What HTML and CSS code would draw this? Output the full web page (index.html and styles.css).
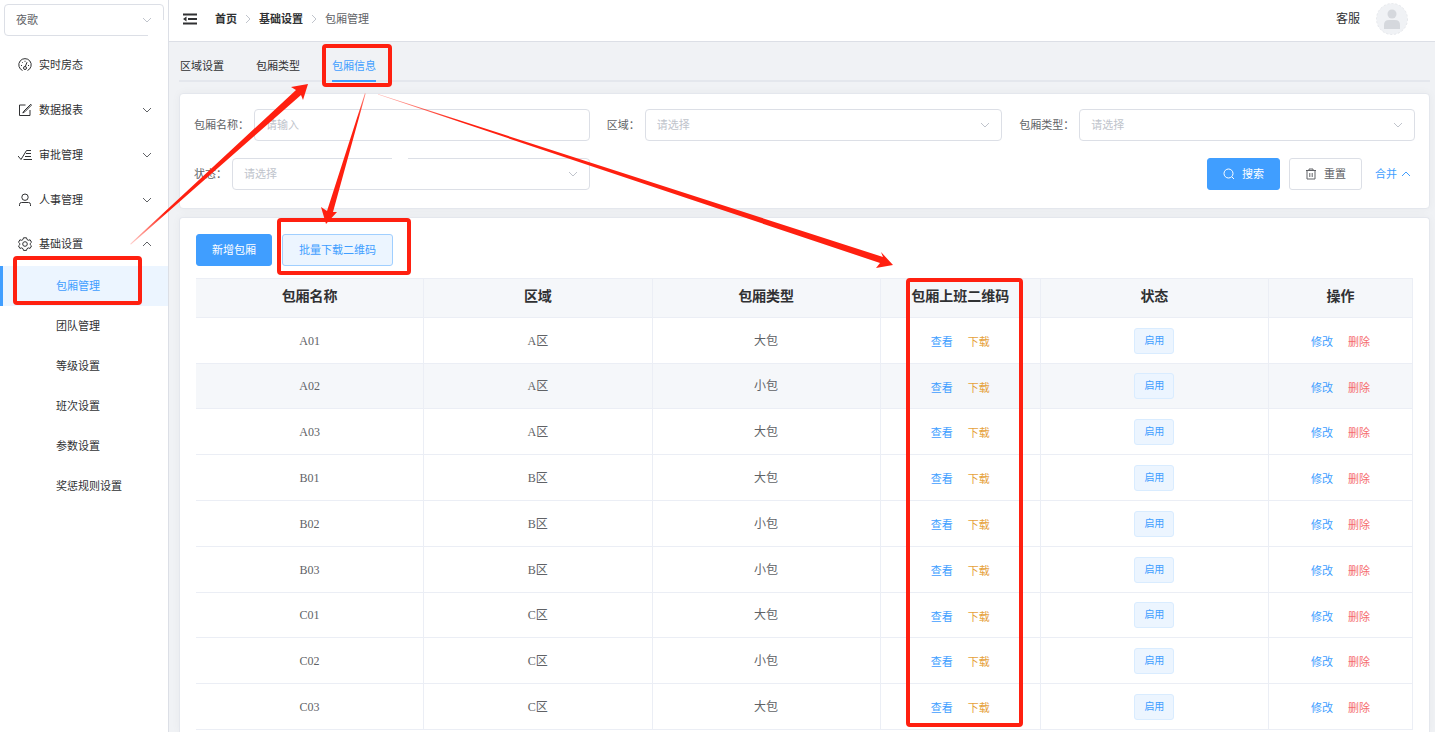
FILE: index.html
```html
<!DOCTYPE html>
<html lang="zh-CN">
<head>
<meta charset="utf-8">
<title>包厢管理</title>
<link rel="stylesheet" href="styles.css">
</head>
<body>
<svg class="defs" aria-hidden="true">
  <symbol id="down" viewBox="0 0 10 10"><path d="M1 3l4 4 4-4" fill="none" stroke="currentColor"/></symbol>
  <symbol id="up" viewBox="0 0 10 10"><path d="M1 7l4-4 4 4" fill="none" stroke="currentColor"/></symbol>
  <symbol id="right" viewBox="0 0 10 10"><path d="M3 1l4 4-4 4" fill="none" stroke="currentColor"/></symbol>
</svg>
<div class="app">
  <aside class="sidebar">
    <div class="select store">
      <select aria-label="门店"><option>夜歌</option></select>
      <svg class="arrow"><use href="#down"/></svg>
    </div>
    <nav class="menu">
      <a class="item" href="#">
        <svg class="icon" viewBox="0 0 14 14"><path d="M4.500 12.500A6.200 6.200 0 1 1 9.500 12.500M3 7.500h1M4.200 4.200l.7.7M7 2.800v1M10 7.500h1M7.300 8.500L9 4.200"/><circle cx="7" cy="10" r="1.500"/></svg>
        <span>实时房态</span>
      </a>
      <a class="item" href="#">
        <svg class="icon" viewBox="0 0 14 14"><path d="M7.500 2H1.500v10.500H12V7M12.800 1.200L6 8l-1.200 2 2-1.200 6.500-6.500z"/></svg>
        <span>数据报表</span><svg class="arrow"><use href="#down"/></svg>
      </a>
      <a class="item" href="#">
        <svg class="icon" viewBox="0 0 14 14"><path d="M0 8l3 3.500L8.500 2.500H13M8 5.500h5M7 8.500h6M5.500 11.500H14"/></svg>
        <span>审批管理</span><svg class="arrow"><use href="#down"/></svg>
      </a>
      <a class="item" href="#">
        <svg class="icon" viewBox="0 0 14 14"><circle cx="7" cy="4.200" r="3.200"/><path d="M1.500 13v-1.500q0-2 2-2h7q2 0 2 2V13"/></svg>
        <span>人事管理</span><svg class="arrow"><use href="#down"/></svg>
      </a>
      <a class="item" href="#">
        <svg class="icon" viewBox="0 0 14 14"><path d="M5.500.8h3l.5 1.700 1.300.8 1.800-.5 1.400 2.500-1.300 1.200v1.200l1.300 1.200-1.400 2.500-1.800-.5-1.300.8-.5 1.700h-3L5 11.700l-1.300-.8-1.800.5L.5 8.900l1.300-1.200V6.500L.5 5.300l1.400-2.500 1.800.5L5 2.500z"/><circle cx="7" cy="7" r="2.300"/></svg>
        <span>基础设置</span><svg class="arrow"><use href="#up"/></svg>
      </a>
      <a class="sub active" href="#">包厢管理</a>
      <a class="sub" href="#">团队管理</a>
      <a class="sub" href="#">等级设置</a>
      <a class="sub" href="#">班次设置</a>
      <a class="sub" href="#">参数设置</a>
      <a class="sub" href="#">奖惩规则设置</a>
    </nav>
  </aside>

  <div class="page">
    <header class="topbar">
      <button class="fold" aria-label="收起菜单"><svg viewBox="0 0 14 12"><path d="M0 1.500h14M5 6h9M0 10.500h14" stroke="currentColor" stroke-width="2"/><path d="M0 6l3.500-2.500v5z" fill="currentColor"/></svg></button>
      <nav class="crumbs">
        <a href="#">首页</a><svg><use href="#right"/></svg>
        <a href="#">基础设置</a><svg><use href="#right"/></svg>
        <span>包厢管理</span>
      </nav>
      <div class="user">
        <span>客服</span>
        <svg class="avatar" viewBox="0 0 32 32"><circle cx="16" cy="16" r="15.500" fill="#f0f2f5" stroke="#e6e8ec" stroke-dasharray="2 2"/><circle cx="16" cy="11" r="4.500" fill="#d5d8dd"/><path d="M8 26v-4q0-5 5-5h6q5 0 5 5v4z" fill="#d5d8dd"/></svg>
      </div>
    </header>

    <main class="content">
      <nav class="tabs">
        <a href="#">区域设置</a>
        <a href="#">包厢类型</a>
        <a class="current" href="#">包厢信息</a>
      </nav>

      <form class="card filter">
        <div class="field">
          <label for="name">包厢名称：</label>
          <input id="name" type="text" placeholder="请输入">
        </div>
        <div class="field">
          <label for="area">区域：</label>
          <div class="select"><select id="area"><option>请选择</option></select><svg class="arrow"><use href="#down"/></svg></div>
        </div>
        <div class="field">
          <label for="type">包厢类型：</label>
          <div class="select"><select id="type"><option>请选择</option></select><svg class="arrow"><use href="#down"/></svg></div>
        </div>
        <div class="field">
          <label for="state">状态：</label>
          <div class="select state"><select id="state"><option>请选择</option></select><svg class="arrow"><use href="#down"/></svg></div>
        </div>
        <div class="actions">
          <button type="button" class="btn primary"><svg viewBox="0 0 12 12"><circle cx="5.500" cy="5.500" r="4.500"/><path d="M9 9l2 2"/></svg>搜索</button>
          <button type="button" class="btn"><svg viewBox="0 0 12 12"><path d="M1 2.500h10M4 2.500V1h4v1.500M2 2.500v8.500h8V2.500M4.800 5v4M7.200 5v4"/></svg>重置</button>
          <button type="button" class="link collapse">合并<svg><use href="#up"/></svg></button>
        </div>
      </form>

      <section class="card list">
        <div class="tools">
          <button type="button" class="btn primary">新增包厢</button>
          <button type="button" class="btn plain">批量下载二维码</button>
        </div>
        <table>
          <colgroup><col><col><col><col class="code"><col><col class="ops"></colgroup>
          <thead>
            <tr><th>包厢名称</th><th>区域</th><th>包厢类型</th><th>包厢上班二维码</th><th>状态</th><th>操作</th></tr>
          </thead>
          <tbody>
            <tr><td>A01</td><td>A区</td><td>大包</td><td><div class="links"><button class="link">查看</button><button class="link warn">下载</button></div></td><td><span class="tag">启用</span></td><td><div class="links"><button class="link">修改</button><button class="link danger">删除</button></div></td></tr>
            <tr class="hover"><td>A02</td><td>A区</td><td>小包</td><td><div class="links"><button class="link">查看</button><button class="link warn">下载</button></div></td><td><span class="tag">启用</span></td><td><div class="links"><button class="link">修改</button><button class="link danger">删除</button></div></td></tr>
            <tr><td>A03</td><td>A区</td><td>大包</td><td><div class="links"><button class="link">查看</button><button class="link warn">下载</button></div></td><td><span class="tag">启用</span></td><td><div class="links"><button class="link">修改</button><button class="link danger">删除</button></div></td></tr>
            <tr><td>B01</td><td>B区</td><td>大包</td><td><div class="links"><button class="link">查看</button><button class="link warn">下载</button></div></td><td><span class="tag">启用</span></td><td><div class="links"><button class="link">修改</button><button class="link danger">删除</button></div></td></tr>
            <tr><td>B02</td><td>B区</td><td>小包</td><td><div class="links"><button class="link">查看</button><button class="link warn">下载</button></div></td><td><span class="tag">启用</span></td><td><div class="links"><button class="link">修改</button><button class="link danger">删除</button></div></td></tr>
            <tr><td>B03</td><td>B区</td><td>小包</td><td><div class="links"><button class="link">查看</button><button class="link warn">下载</button></div></td><td><span class="tag">启用</span></td><td><div class="links"><button class="link">修改</button><button class="link danger">删除</button></div></td></tr>
            <tr><td>C01</td><td>C区</td><td>大包</td><td><div class="links"><button class="link">查看</button><button class="link warn">下载</button></div></td><td><span class="tag">启用</span></td><td><div class="links"><button class="link">修改</button><button class="link danger">删除</button></div></td></tr>
            <tr><td>C02</td><td>C区</td><td>小包</td><td><div class="links"><button class="link">查看</button><button class="link warn">下载</button></div></td><td><span class="tag">启用</span></td><td><div class="links"><button class="link">修改</button><button class="link danger">删除</button></div></td></tr>
            <tr><td>C03</td><td>C区</td><td>大包</td><td><div class="links"><button class="link">查看</button><button class="link warn">下载</button></div></td><td><span class="tag">启用</span></td><td><div class="links"><button class="link">修改</button><button class="link danger">删除</button></div></td></tr>
          </tbody>
        </table>
      </section>
    </main>
  </div>
</div>

<!-- Guide marks: boxes and arrows drawn over the page -->
<svg class="marks" width="1435" height="732" aria-hidden="true">
  <defs>
    <linearGradient id="f1" gradientUnits="userSpaceOnUse" x1="130" y1="244" x2="165" y2="213"><stop offset="0" stop-color="#ff2010" stop-opacity=".2"/><stop offset="1" stop-color="#ff2010"/></linearGradient>
    <linearGradient id="f2" gradientUnits="userSpaceOnUse" x1="365" y1="93" x2="358" y2="118"><stop offset="0" stop-color="#ff2010" stop-opacity=".5"/><stop offset="1" stop-color="#ff2010"/></linearGradient>
    <linearGradient id="f3" gradientUnits="userSpaceOnUse" x1="378" y1="94" x2="460" y2="121"><stop offset="0" stop-color="#ff2010" stop-opacity=".3"/><stop offset="1" stop-color="#ff2010"/></linearGradient>
  </defs>
  <g fill="none" stroke="#ff2010" stroke-width="4">
    <rect x="324" y="46" width="66" height="39" rx="2"/>
    <rect x="15" y="258" width="125" height="45" rx="2"/>
    <rect x="279" y="220" width="130" height="53" rx="2"/>
    <rect x="908" y="280" width="113" height="445" rx="2"/>
  </g>
  <path fill="url(#f1)" d="M130 244L296 90L291 87L308 84L303 100L301 95L131 244.500z"/>
  <path fill="url(#f2)" d="M365 93L327 211L321 207L326 224L337 212L333 212L365.500 94z"/>
  <path fill="url(#f3)" d="M378 94L883 257L881 252L893 265L876 268L880 263L378 94.500z"/>
</svg>
</body>
</html>
```
FILE: styles.css
```css
* { box-sizing: border-box; }

body {
  margin: 0;
  font: 11px/16px "Liberation Serif", "Noto Sans CJK SC", sans-serif;
  color: #303133;
  background: #fff;
}

a { color: inherit; text-decoration: none; }
button, input, select { font: inherit; color: inherit; }
button { padding: 0; border: 0; background: none; }
svg { display: block; flex: none; }

.defs { position: absolute; width: 0; height: 0; }

.app { display: flex; height: 100vh; overflow: hidden; }

/* Sidebar */
.sidebar { flex: none; width: 169px; border-right: 1px solid #dcdfe6; }
.store { margin: 4px 4px 6px; color: #606266; }
.menu { display: flex; flex-direction: column; }
.item {
  display: flex;
  align-items: center;
  gap: 7px;
  height: 45px;
  padding: 0 16px 0 18px;
}
.item:nth-child(5) { height: 44px; }
.item .arrow { margin-left: auto; color: #606266; }
.icon {
  width: 14px;
  height: 14px;
  fill: none;
  stroke: #303133;
}
.arrow { width: 10px; height: 10px; }
.sub {
  height: 40px;
  padding-left: 53px;
  line-height: 40px;
  border-left: 3px solid transparent;
}
.sub.active { color: #409eff; background: #ecf5ff; border-color: #409eff; }

/* Form controls */
.select { position: relative; flex: 1; }
.select select, .field input {
  display: block;
  width: 100%;
  height: 32px;
  padding: 0 11px;
  border: 1px solid #dcdfe6;
  border-radius: 4px;
  background: #fff;
  appearance: none;
}
.select .arrow { position: absolute; right: 12px; top: 11px; color: #c0c4cc; }
.store::before, .store::after, .state::after {
  content: "";
  position: absolute;
  background: #fff;
}
.store::before { right: 0; bottom: 0; width: 16px; height: 3px; }
.store::after { right: 0; bottom: 0; width: 3px; height: 16px; }
.state::after { left: 160px; top: 0; width: 16px; height: 1px; }

/* Top bar */
.page { flex: 1; min-width: 0; display: flex; flex-direction: column; }
.topbar {
  flex: none;
  display: flex;
  align-items: center;
  height: 42px;
  padding: 0 27px 3px 14px;
  border-bottom: 1px solid #dcdfe6;
}
.fold svg { width: 14px; height: 12px; }
.crumbs { display: flex; align-items: center; gap: 6px; margin-left: 18px; color: #606266; }
.crumbs a { font-weight: 700; color: #303133; }
.crumbs svg { width: 10px; height: 10px; color: #c0c4cc; }
.user { display: flex; align-items: center; gap: 16px; margin-left: auto; font-size: 12px; }
.avatar { width: 32px; height: 32px; }

/* Content */
.content {
  flex: 1;
  display: flex;
  flex-direction: column;
  padding: 8px 5px 0 10px;
  background: #f0f2f5;
}
.tabs { display: flex; gap: 32px; margin-bottom: 11px; padding-left: 1px; border-bottom: 2px solid #e4e7ed; }
.tabs a { height: 32px; margin-bottom: -2px; line-height: 32px; border-bottom: 2px solid transparent; }
.tabs .current { color: #409eff; border-color: #409eff; }

.card {
  background: #fff;
  border: 1px solid #e4e7ed;
  border-radius: 4px;
  box-shadow: 0 0 10px rgba(0, 0, 0, .04);
}
.filter {
  display: grid;
  grid-template-columns: repeat(3, 1fr);
  gap: 17px;
  margin-bottom: 8px;
  padding: 15px 14px 18px;
  color: #606266;
}
.field { display: flex; align-items: center; gap: 5px; }
.field select, .field input::placeholder { color: #c0c4cc; }
.field input { flex: 1; min-width: 0; }
.actions { grid-column: 3; display: flex; align-items: center; justify-content: flex-end; gap: 9px; }

.btn {
  display: flex;
  align-items: center;
  justify-content: center;
  gap: 7px;
  height: 32px;
  padding: 0 15px;
  border: 1px solid #dcdfe6;
  border-radius: 3px;
  color: #606266;
  background: #fff;
}
.btn svg { width: 12px; height: 12px; fill: none; stroke: currentColor; }
.btn.primary { color: #fff; background: #409eff; border-color: #409eff; }
.btn.plain { padding: 0 16px; color: #409eff; background: #ecf5ff; border-color: #a0cfff; }

.link { color: #409eff; }
.link.warn { color: #e6a23c; }
.link.danger { color: #f56c6c; }
.collapse { display: flex; align-items: center; gap: 4px; padding: 0 4px; }
.collapse svg { width: 10px; height: 10px; }

/* List */
.list { flex: 1; padding: 16px 16px 0; border-bottom: 0; border-radius: 4px 4px 0 0; }
.tools { display: flex; gap: 10px; margin-bottom: 12px; }

table {
  width: 100%;
  table-layout: fixed;
  border-collapse: separate;
  border-spacing: 0;
  border-top: 1px solid #ebeef5;
  font-size: 12px;
  color: #606266;
}
.code { width: 160px; }
.ops { width: 144px; }
th, td {
  padding: 0;
  text-align: center;
  border-right: 1px solid #ebeef5;
  border-bottom: 1px solid #ebeef5;
}
th {
  height: 39px;
  padding-bottom: 3px;
  font-size: 14px;
  color: #303133;
  background: #f5f7fa;
}
td { height: 46px; }
tr:nth-child(5n + 2) td { height: 45px; }
.hover td { background: #f5f7fa; }
.links { display: flex; justify-content: center; gap: 15px; padding-top: 3px; font-size: 11px; }
.tag {
  display: inline-block;
  padding: 0 9px;
  line-height: 24px;
  font-size: 10px;
  color: #409eff;
  background: #ecf5ff;
  border: 1px solid #d9ecff;
  border-radius: 3px;
}

.marks { position: absolute; left: 0; top: 0; pointer-events: none; }
```
